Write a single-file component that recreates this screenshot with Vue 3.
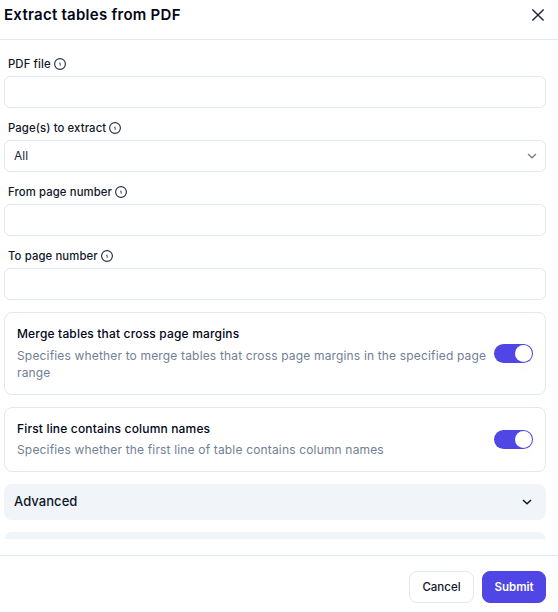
<script setup>
import { ref } from 'vue'

const fields = [
  { id: 'file', label: 'PDF file' },
  { id: 'pages', label: 'Page(s) to extract', value: 'All' },
  { id: 'from', label: 'From page number' },
  { id: 'to', label: 'To page number' },
]

const options = ref([
  {
    id: 'merge',
    title: 'Merge tables that cross page margins',
    text: 'Specifies whether to merge tables that cross page margins in the specified page range',
    on: true,
  },
  {
    id: 'header',
    title: 'First line contains column names',
    text: 'Specifies whether the first line of table contains column names',
    on: true,
  },
])
</script>

<template>
  <div class="dialog">
    <header class="head">
      <h1>Extract tables from PDF</h1>
      <svg class="close" viewBox="0 0 16 16"><path d="M2.4 2.4 13.6 13.6M13.6 2.4 2.4 13.6" /></svg>
    </header>

    <main class="body">
      <div v-for="f in fields" :key="f.id" class="field">
        <div class="label">
          <span>{{ f.label }}</span>
          <svg class="info" viewBox="0 0 12 12">
            <circle cx="6" cy="6" r="5.4" />
            <path class="mark" d="M5.3 5.6H6.2V7.8M5.9 4.6V5.4" />
          </svg>
        </div>
        <div class="control">
          <template v-if="f.value">
            <span>{{ f.value }}</span>
            <svg class="chev" viewBox="0 0 10 6"><path d="M1 1 5 4.8 9 1" /></svg>
          </template>
        </div>
      </div>

      <section v-for="o in options" :key="o.id" class="card">
        <div class="copy">
          <h2>{{ o.title }}</h2>
          <p>{{ o.text }}</p>
        </div>
        <button class="switch" :class="{ on: o.on }" @click="o.on = !o.on"><i></i></button>
      </section>

      <div class="panel">
        <span>Advanced</span>
        <svg class="chev dark" viewBox="0 0 10 6"><path d="M1 1 5 4.8 9 1" /></svg>
      </div>
      <div class="panel"></div>
    </main>

    <footer class="foot">
      <button class="btn">Cancel</button>
      <button class="btn primary">Submit</button>
    </footer>
  </div>
</template>

<style>
body {
  background: #fff;
  overflow: hidden;
}
</style>

<style scoped>
* {
  box-sizing: border-box;
}
.dialog {
  width: 558px;
  height: 612px;
  display: flex;
  flex-direction: column;
  font-family: Inter, sans-serif;
  color: #0f172a;
  background: #fff;
}
.head {
  height: 40px;
  flex: none;
  display: flex;
  align-items: center;
  justify-content: space-between;
  padding: 0 12px 9px 4px;
  border-bottom: 1px solid #e2e8f0;
}
h1 {
  margin: 0;
  font-size: 15px;
  line-height: 20px;
  font-weight: 600;
  letter-spacing: 0.26px;
  color: #020617;
}
.close {
  width: 16px;
  height: 16px;
  fill: none;
  stroke: #1e2235;
  stroke-width: 1.4;
}
.body {
  height: 499px;
  flex: none;
  overflow: hidden;
  padding: 16px 12px 0 4px;
  display: flex;
  flex-direction: column;
  gap: 12px;
}
.field {
  flex: none;
  display: flex;
  flex-direction: column;
  gap: 4px;
}
.label {
  height: 16px;
  padding-left: 4px;
  display: flex;
  align-items: center;
  gap: 3px;
  font-size: 11.3px;
  line-height: 16px;
  font-weight: 500;
  letter-spacing: 0.12px;
}
.info {
  width: 12px;
  height: 12px;
  fill: none;
  stroke: #2b3040;
  stroke-width: 1.15;
}
.mark {
  stroke: #4b5060;
  stroke-width: 1;
}
.control {
  height: 32px;
  border: 1px solid #e2e8f0;
  border-radius: 6px;
  display: flex;
  align-items: center;
  justify-content: space-between;
  padding: 0 8px 0 9px;
  font-size: 12px;
  line-height: 16px;
  color: #1e293b;
}
.control span {
  padding-bottom: 1px;
}
.chev {
  width: 10px;
  height: 6px;
  fill: none;
  stroke: #73798a;
  stroke-width: 1.2;
}
.dark {
  stroke: #0f172a;
  stroke-width: 1.5;
}
.card {
  flex: none;
  border: 1px solid #e2e8f0;
  border-radius: 8px;
  padding: 12px;
  display: flex;
  align-items: center;
  justify-content: space-between;
}
.copy {
  width: 474px;
  letter-spacing: 0.165px;
}
h2 {
  margin: 0 0 3.6px;
  font-size: 12px;
  line-height: 18px;
  font-weight: 500;
  color: #020617;
}
p {
  margin: 0 0 0.4px;
  font-size: 12px;
  line-height: 17.4px;
  color: #718096;
}
.switch {
  flex: none;
  width: 39px;
  height: 19px;
  padding: 1px;
  border: 0;
  border-radius: 10px;
  background: #cbd5e1;
  display: flex;
}
.switch.on {
  background: #4f46e5;
  justify-content: flex-end;
}
.switch i {
  width: 17px;
  height: 17px;
  border-radius: 50%;
  background: #fff;
  box-shadow: 0 10px 15px -3px rgba(0, 0, 0, 0.04);
}
.panel {
  flex: none;
  height: 36px;
  border-radius: 8px;
  background: #f1f5f9;
  display: flex;
  align-items: center;
  justify-content: space-between;
  padding: 0 14px 0 10px;
  font-size: 13px;
  line-height: 18px;
  font-weight: 500;
  letter-spacing: 0.05px;
}
.panel span {
  padding-bottom: 2px;
}
.foot {
  flex: none;
  margin-top: 16px;
  height: 57px;
  border-top: 1px solid #e2e8f0;
  display: flex;
  justify-content: flex-end;
  gap: 8px;
  padding: 15px 12px 0 0;
}
.btn {
  width: 65px;
  height: 32px;
  padding: 0;
  border: 1px solid #e2e8f0;
  border-radius: 8px;
  background: #fff;
  font: 500 11.5px/16px Inter, sans-serif;
  color: #0f172a;
}
.primary {
  width: 64px;
  border-color: #4f46e5;
  background: #4f46e5;
  color: #fff;
  font-weight: 600;
}
</style>
